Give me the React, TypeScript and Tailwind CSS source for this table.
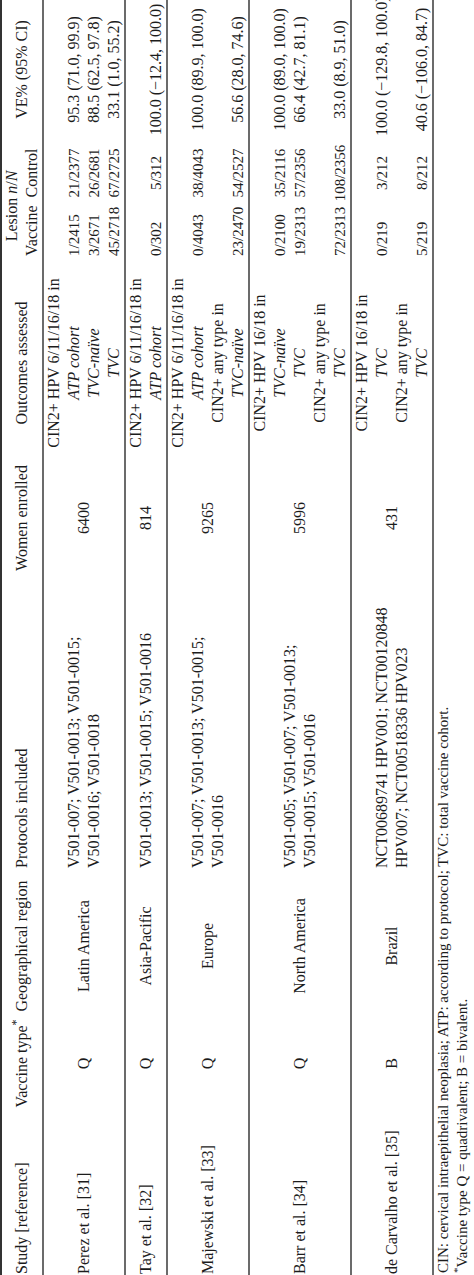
import React from 'react';

type Line = string | { i: string } | null;

interface Row {
  study: string;
  type: string;
  region: string;
  protocols: string[];
  women: string;
  outcomes: Line[];
  vaccine: Line[];
  control: Line[];
  ve: Line[];
}

const rows: Row[] = [
  {
    study: 'Perez et al. [31]',
    type: 'Q',
    region: 'Latin America',
    protocols: ['V501-007; V501-0013; V501-0015;', 'V501-0016; V501-0018'],
    women: '6400',
    outcomes: ['CIN2+ HPV 6/11/16/18 in', { i: 'ATP cohort' }, { i: 'TVC-naïve' }, { i: 'TVC' }],
    vaccine: [null, '1/2415', '3/2671', '45/2718'],
    control: [null, '21/2377', '26/2681', '67/2725'],
    ve: [null, '95.3 (71.0, 99.9)', '88.5 (62.5, 97.8)', '33.1 (1.0, 55.2)'],
  },
  {
    study: 'Tay et al. [32]',
    type: 'Q',
    region: 'Asia-Pacific',
    protocols: ['V501-0013; V501-0015; V501-0016'],
    women: '814',
    outcomes: ['CIN2+ HPV 6/11/16/18 in', { i: 'ATP cohort' }],
    vaccine: [null, '0/302'],
    control: [null, '5/312'],
    ve: [null, '100.0 (\u221212.4, 100.0)'],
  },
  {
    study: 'Majewski et al. [33]',
    type: 'Q',
    region: 'Europe',
    protocols: ['V501-007; V501-0013; V501-0015;', 'V501-0016'],
    women: '9265',
    outcomes: ['CIN2+ HPV 6/11/16/18 in', { i: 'ATP cohort' }, 'CIN2+ any type in', { i: 'TVC-naïve' }],
    vaccine: [null, '0/4043', null, '23/2470'],
    control: [null, '38/4043', null, '54/2527'],
    ve: [null, '100.0 (89.9, 100.0)', null, '56.6 (28.0, 74.6)'],
  },
  {
    study: 'Barr et al. [34]',
    type: 'Q',
    region: 'North America',
    protocols: ['V501-005; V501-007; V501-0013;', 'V501-0015; V501-0016'],
    women: '5996',
    outcomes: ['CIN2+ HPV 16/18 in', { i: 'TVC-naïve' }, { i: 'TVC' }, 'CIN2+ any type in', { i: 'TVC' }],
    vaccine: [null, '0/2100', '19/2313', null, '72/2313'],
    control: [null, '35/2116', '57/2356', null, '108/2356'],
    ve: [null, '100.0 (89.0, 100.0)', '66.4 (42.7, 81.1)', null, '33.0 (8.9, 51.0)'],
  },
  {
    study: 'de Carvalho et al. [35]',
    type: 'B',
    region: 'Brazil',
    protocols: ['NCT00689741 HPV001; NCT00120848', 'HPV007; NCT00518336 HPV023'],
    women: '431',
    outcomes: ['CIN2+ HPV 16/18 in', { i: 'TVC' }, 'CIN2+ any type in', { i: 'TVC' }],
    vaccine: [null, '0/219', null, '5/219'],
    control: [null, '3/212', null, '8/212'],
    ve: [null, '100.0 (\u2212129.8, 100.0)', null, '40.6 (\u2212106.0, 84.7)'],
  },
];

const Lines = ({ lines }: { lines: Line[] }) => (
  <>
    {lines.map((l, k) => (
      <div key={k} className="h-5 leading-5 whitespace-nowrap">
        {l === null ? '\u00a0' : typeof l === 'string' ? l : <i>{l.i}</i>}
      </div>
    ))}
  </>
);

const App: React.FC = () => {
  return (
    <div className="w-[474px] h-[1275px] overflow-hidden bg-white">
      <div className="w-[1280px] origin-top-left translate-y-[1276px] -rotate-90 font-['Liberation_Serif',serif] text-[16px] text-[#1c1c1c]">
        {/* header */}
        <div className="flex border-t-2 border-t-[#333] border-b-2 border-b-[#6b6b6b]">
          <div className="w-[170px] pl-[2px] flex items-center whitespace-nowrap">Study [reference]</div>
          <div className="w-[85px] flex items-center justify-center whitespace-nowrap">
            Vaccine type<sup>*</sup>
          </div>
          <div className="w-[150px] flex items-center justify-center whitespace-nowrap">Geographical region</div>
          <div className="w-[285px] pl-[3px] flex items-center whitespace-nowrap">Protocols included</div>
          <div className="w-[136px] flex items-center justify-center whitespace-nowrap">Women enrolled</div>
          <div className="w-[174px] flex items-center justify-center whitespace-nowrap">Outcomes assessed</div>
          <div className="w-[140px] flex flex-col">
            <div className="h-5 leading-5 text-center whitespace-nowrap">
              Lesion <i>n</i>/<i>N</i>
            </div>
            <div className="flex h-5 leading-5">
              <div className="w-[66px] pl-[20px] whitespace-nowrap">Vaccine</div>
              <div className="w-[74px] text-center whitespace-nowrap">Control</div>
            </div>
          </div>
          <div className="w-[133px] flex items-center justify-center whitespace-nowrap">VE% (95% CI)</div>
        </div>

        {rows.map((r) => (
          <div key={r.study} className="flex border-b-2 border-b-[#6b6b6b]">
            <div className="w-[170px] pl-[2px] flex items-center whitespace-nowrap">{r.study}</div>
            <div className="w-[85px] flex items-center justify-center">{r.type}</div>
            <div className="w-[150px] flex items-center justify-center whitespace-nowrap">{r.region}</div>
            <div className="w-[285px] pl-[3px] flex flex-col justify-center">
              {r.protocols.map((p) => (
                <div key={p} className="h-5 leading-5 whitespace-nowrap">
                  {p}
                </div>
              ))}
            </div>
            <div className="w-[136px] flex items-center justify-center">{r.women}</div>
            <div className="w-[174px] text-center">
              <Lines lines={r.outcomes} />
            </div>
            <div className="w-[66px] pl-[20px] text-[15px]">
              <Lines lines={r.vaccine} />
            </div>
            <div className="w-[74px] text-center text-[15px]">
              <Lines lines={r.control} />
            </div>
            <div className="w-[133px] text-center">
              <Lines lines={r.ve} />
            </div>
          </div>
        ))}

        {/* notes */}
        <div className="pl-[3px] text-[15px] leading-[19px] whitespace-nowrap">
          <p>CIN: cervical intraepithelial neoplasia; ATP: according to protocol; TVC: total vaccine cohort.</p>
          <p>
            <sup>*</sup>Vaccine type Q = quadrivalent; B = bivalent.
          </p>
        </div>
      </div>
    </div>
  );
};

export default App;
